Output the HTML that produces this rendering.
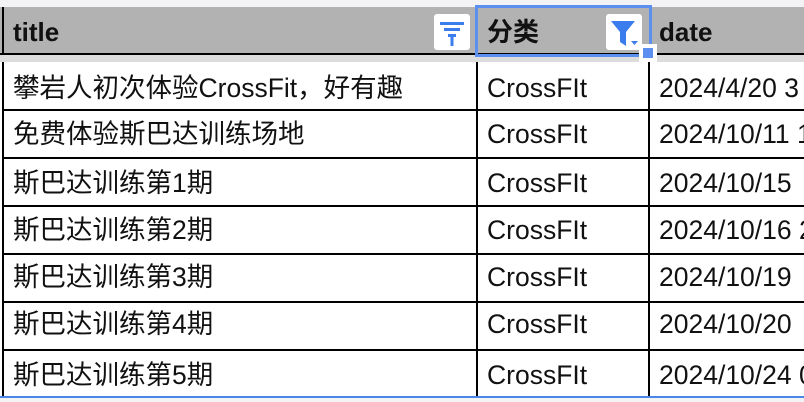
<!DOCTYPE html>
<html><head><meta charset="utf-8"><style>
html,body{margin:0;padding:0;width:804px;height:402px;overflow:hidden;background:#f3f3f5;position:relative;font-family:"Liberation Sans","Noto Sans CJK SC",sans-serif;}
.a{position:absolute;}
.hdr{left:0;top:7px;width:804px;height:46px;background:#b1b2b1;}
.hl{left:0;top:53px;width:804px;height:2px;background:#000;}
.gap{left:0;top:55px;width:804px;height:7px;background:#dcdcdc;}
.body{left:0;top:62px;width:804px;height:336px;background:#fff;}
.h{position:absolute;font-weight:bold;font-size:26px;line-height:30px;color:#111;top:17px;}
.t{position:absolute;font-size:26.5px;line-height:30px;color:#111;white-space:nowrap;}
.hline{position:absolute;left:3px;width:801px;height:2px;background:#000;}
.vline{position:absolute;width:2px;background:#000;}
.btn{position:absolute;width:36px;height:36px;background:#fff;border-radius:3px;top:14px;}
</style></head><body>
<div class="a hdr"></div>
<div class="a hl"></div>
<div class="a gap"></div>
<div class="a body"></div>
<div class="vline" style="left:2px;top:7px;height:47px"></div>
<div class="vline" style="left:2px;top:62px;height:336px"></div>
<div class="vline" style="left:476px;top:62px;height:336px"></div>
<div class="vline" style="left:648px;top:62px;height:336px"></div>
<div class="hline" style="top:109px"></div>
<div class="hline" style="top:157px"></div>
<div class="hline" style="top:205px"></div>
<div class="hline" style="top:253px"></div>
<div class="hline" style="top:301px"></div>
<div class="hline" style="top:349px"></div>
<div class="a" style="left:0;top:396px;width:804px;height:2px;background:#4a86e8"></div>
<div class="a" style="left:0;top:398px;width:804px;height:4px;background:#f3f3f5"></div>
<div class="h" style="left:13px">title</div>
<div class="h" style="left:487px">分类</div>
<div class="h" style="left:659px">date</div>
<div class="btn" style="left:434px"><svg width="36" height="36"><g fill="#3b7ded"><rect x="6" y="8" width="24" height="3"/><rect x="10" y="14" width="16" height="3"/><rect x="14" y="20" width="8" height="3"/><rect x="16.5" y="23" width="3" height="9"/></g></svg></div>
<div class="btn" style="left:606px"><svg width="36" height="36"><path d="M5 7H29L20 18V32L14 28V18Z" fill="#3b7ded"/><path d="M25 27H32L28.5 31Z" fill="#3b7ded"/></svg></div>
<div class="a" style="left:475px;top:5px;width:171px;height:46px;border:3px solid #5b8ff0"></div>
<div class="a" style="left:639px;top:44px;width:18px;height:18px;background:#fff"></div>
<div class="a" style="left:643px;top:48px;width:10px;height:10px;background:#5b8ff0"></div>
<div class="t" style="left:13px;top:73px">攀岩人初次体验CrossFit，好有趣</div>
<div class="t" style="left:13px;top:119px">免费体验斯巴达训练场地</div>
<div class="t" style="left:13px;top:168px">斯巴达训练第1期</div>
<div class="t" style="left:13px;top:215px">斯巴达训练第2期</div>
<div class="t" style="left:13px;top:262px">斯巴达训练第3期</div>
<div class="t" style="left:13px;top:309px">斯巴达训练第4期</div>
<div class="t" style="left:13px;top:360px">斯巴达训练第5期</div>
<div class="t" style="left:487px;top:73px">CrossFIt</div>
<div class="t" style="left:487px;top:119px">CrossFIt</div>
<div class="t" style="left:487px;top:168px">CrossFIt</div>
<div class="t" style="left:487px;top:215px">CrossFIt</div>
<div class="t" style="left:487px;top:262px">CrossFIt</div>
<div class="t" style="left:487px;top:309px">CrossFIt</div>
<div class="t" style="left:487px;top:360px">CrossFIt</div>
<div class="t" style="left:659px;top:73px">2024/4/20 3</div>
<div class="t" style="left:659px;top:119px">2024/10/11 1</div>
<div class="t" style="left:659px;top:168px">2024/10/15</div>
<div class="t" style="left:659px;top:215px">2024/10/16 2</div>
<div class="t" style="left:659px;top:262px">2024/10/19</div>
<div class="t" style="left:659px;top:309px">2024/10/20</div>
<div class="t" style="left:659px;top:360px">2024/10/24 0</div>
</body></html>
